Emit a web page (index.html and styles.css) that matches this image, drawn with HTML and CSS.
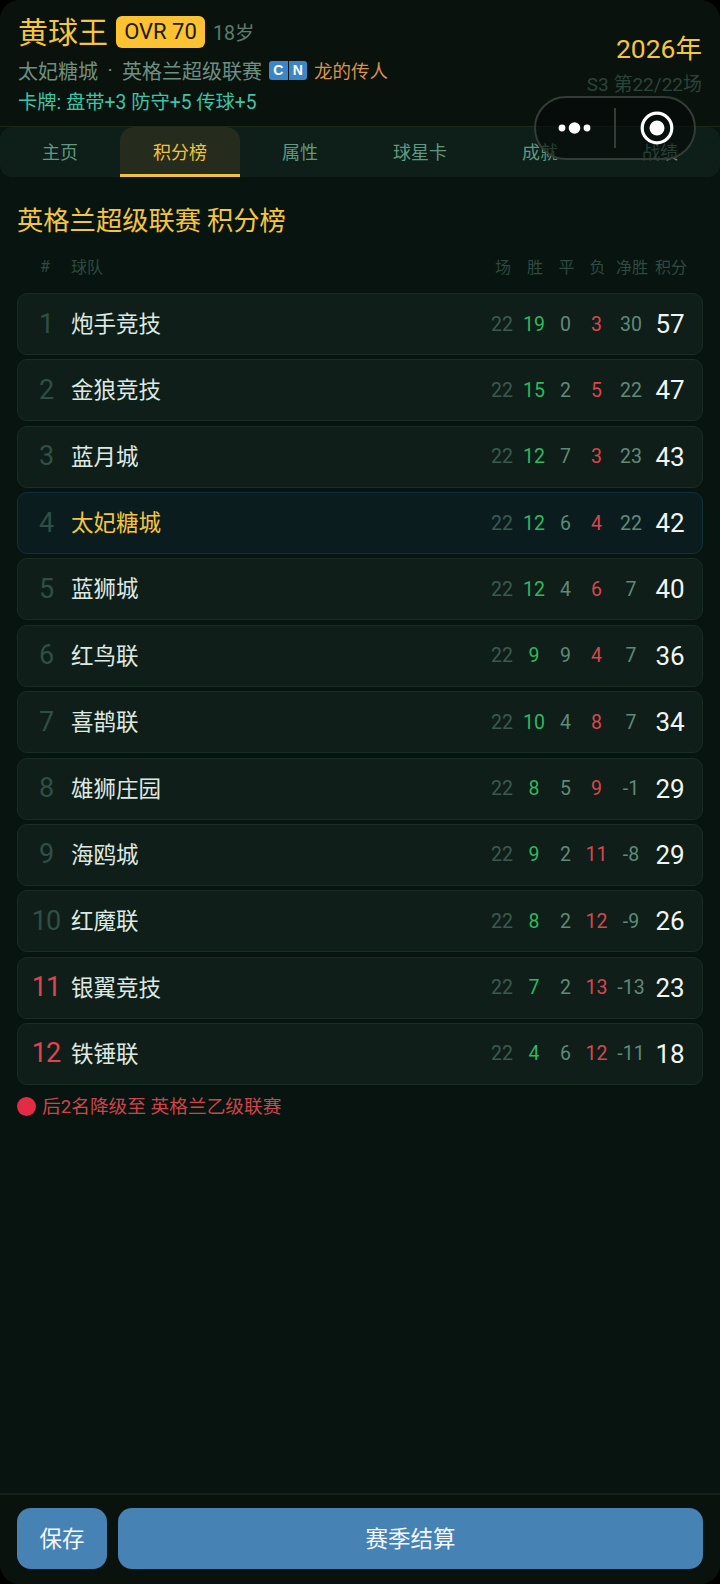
FILE: index.html
```html
<!DOCTYPE html>
<html lang="zh">
<head>
    <meta charset="UTF-8">
    <title>积分榜</title>
    <link rel="stylesheet" href="styles.css">
</head>
<body>
<div class="screen">

    <header class="top">
        <div class="top-left">
            <div class="name-line">
                <span class="player-name">黄球王</span>
                <span class="ovr">OVR 70</span>
                <span class="age">18岁</span>
            </div>
            <div class="club-line">
                <span>太妃糖城</span>
                <span class="club-dot">·</span>
                <span>英格兰超级联赛</span>
                <span class="flag"><i>C</i><i>N</i></span>
                <span class="trait">龙的传人</span>
            </div>
            <div class="card-line">卡牌: 盘带+3 防守+5 传球+5</div>
        </div>
        <div class="top-right">
            <div class="year">2026年</div>
            <div class="season">S3 第22/22场</div>
        </div>
    </header>

    <!-- Capsule -->
    <div class="capsule">
        <svg class="capsule-dots" width="36" height="12" viewBox="0 0 36 12"><circle cx="5" cy="6" r="3.4"/><circle cx="17.500" cy="6" r="5.800"/><circle cx="30" cy="6" r="3.400"/></svg>
        <span class="capsule-line"></span>
        <svg class="capsule-target" width="34" height="34" viewBox="0 0 34 34"><circle cx="17" cy="17" r="14.800" fill="none" stroke="#fff" stroke-width="3.200"/><circle cx="17" cy="17" r="7.500" fill="#fff"/></svg>
    </div>

    <nav class="tabs">
        <div class="tab">主页</div>
        <div class="tab active">积分榜</div>
        <div class="tab">属性</div>
        <div class="tab">球星卡</div>
        <div class="tab">成就</div>
        <div class="tab">战绩</div>
    </nav>

    <main class="content">
        <h2 class="league-title">英格兰超级联赛 积分榜</h2>

        <div class="table-head">
            <span>#</span><span class="team-head">球队</span><span>场</span><span>胜</span><span>平</span><span>负</span><span>净胜</span><span>积分</span>
        </div>

        <div class="rows">
            <div class="row"><span class="rank">1</span><span class="team">炮手竞技</span><span class="p">22</span><span class="w">19</span><span class="d">0</span><span class="l">3</span><span class="gd">30</span><span class="pts">57</span></div>
            <div class="row"><span class="rank">2</span><span class="team">金狼竞技</span><span class="p">22</span><span class="w">15</span><span class="d">2</span><span class="l">5</span><span class="gd">22</span><span class="pts">47</span></div>
            <div class="row"><span class="rank">3</span><span class="team">蓝月城</span><span class="p">22</span><span class="w">12</span><span class="d">7</span><span class="l">3</span><span class="gd">23</span><span class="pts">43</span></div>
            <div class="row mine"><span class="rank">4</span><span class="team">太妃糖城</span><span class="p">22</span><span class="w">12</span><span class="d">6</span><span class="l">4</span><span class="gd">22</span><span class="pts">42</span></div>
            <div class="row"><span class="rank">5</span><span class="team">蓝狮城</span><span class="p">22</span><span class="w">12</span><span class="d">4</span><span class="l">6</span><span class="gd">7</span><span class="pts">40</span></div>
            <div class="row"><span class="rank">6</span><span class="team">红鸟联</span><span class="p">22</span><span class="w">9</span><span class="d">9</span><span class="l">4</span><span class="gd">7</span><span class="pts">36</span></div>
            <div class="row"><span class="rank">7</span><span class="team">喜鹊联</span><span class="p">22</span><span class="w">10</span><span class="d">4</span><span class="l">8</span><span class="gd">7</span><span class="pts">34</span></div>
            <div class="row"><span class="rank">8</span><span class="team">雄狮庄园</span><span class="p">22</span><span class="w">8</span><span class="d">5</span><span class="l">9</span><span class="gd">-1</span><span class="pts">29</span></div>
            <div class="row"><span class="rank">9</span><span class="team">海鸥城</span><span class="p">22</span><span class="w">9</span><span class="d">2</span><span class="l">11</span><span class="gd">-8</span><span class="pts">29</span></div>
            <div class="row"><span class="rank">10</span><span class="team">红魔联</span><span class="p">22</span><span class="w">8</span><span class="d">2</span><span class="l">12</span><span class="gd">-9</span><span class="pts">26</span></div>
            <div class="row down"><span class="rank">11</span><span class="team">银翼竞技</span><span class="p">22</span><span class="w">7</span><span class="d">2</span><span class="l">13</span><span class="gd">-13</span><span class="pts">23</span></div>
            <div class="row down"><span class="rank">12</span><span class="team">铁锤联</span><span class="p">22</span><span class="w">4</span><span class="d">6</span><span class="l">12</span><span class="gd">-11</span><span class="pts">18</span></div>
        </div>

        <div class="note"><span class="note-dot"></span>后2名降级至 英格兰乙级联赛</div>
    </main>

    <footer class="bottom">
        <button class="btn btn-save">保存</button>
        <button class="btn btn-next">赛季结算</button>
    </footer>

</div>
</body>
</html>
```

FILE: styles.css
```css
* {
    box-sizing: border-box;
}

body {
    margin: 0;
    background: #000;
    font-family: Roboto, "Noto Sans CJK SC", sans-serif;
}

.screen {
    position: relative;
    width: 720px;
    height: 1584px;
    display: flex;
    flex-direction: column;
    background: #07140f;
    border-radius: 20px;
    overflow: hidden;
}

/* plain chinese labels, centred on the CJK font's own metrics */
.player-name,
.tab,
.league-title,
.team,
.btn {
    font-family: "Noto Sans CJK SC", sans-serif;
}

/* header */
.top {
    height: 127px;
    flex: none;
    padding: 12px 18px 0 18px;
    display: flex;
    justify-content: space-between;
    background: #0a120e;
    border-bottom: 1px solid #1c2a1c;
}

.name-line {
    display: flex;
    align-items: center;
    height: 40px;
}

.player-name {
    color: #f4c63f;
    font-size: 30px;
    line-height: 40px;
    padding-bottom: 4px;
}

.ovr {
    margin-left: 8px;
    width: 89px;
    height: 32px;
    line-height: 32px;
    text-align: center;
    background: #fdc232;
    color: #1a1a10;
    font-size: 22px;
    border-radius: 6px;
}

.age {
    margin-left: 8px;
    padding-bottom: 2px;
    color: #5d7c6e;
    font-size: 19.500px;
}

.club-line {
    display: flex;
    align-items: center;
    height: 30px;
    margin-top: 3px;
    color: #6f9080;
    font-size: 20px;
    white-space: nowrap;
}

.club-dot {
    width: 24px;
    text-align: center;
}

.flag {
    display: flex;
    margin-left: 7px;
    height: 19px;
    gap: 1px;
}

.flag i {
    width: 18.500px;
    background: #3c86c8;
    color: #fff;
    font-family: "Liberation Sans", sans-serif;
    font-size: 14px;
    font-style: normal;
    font-weight: bold;
    line-height: 19px;
    text-align: center;
}

.flag i:first-child {
    border-radius: 3px 0 0 3px;
}

.flag i:last-child {
    border-radius: 0 3px 3px 0;
}

.trait {
    margin-left: 7px;
    color: #d9914d;
    font-size: 18.500px;
}

.card-line {
    margin-top: 5px;
    color: #3fc4a6;
    font-size: 19.300px;
    line-height: 26px;
}

.top-right {
    padding-top: 20px;
    text-align: right;
}

.year {
    color: #f4c63f;
    font-size: 26.500px;
    line-height: 34px;
}

.season {
    margin-top: 7px;
    color: #2b4439;
    font-size: 19px;
    line-height: 24px;
}

/* capsule */
.capsule {
    position: absolute;
    top: 96px;
    left: 534px;
    width: 162px;
    height: 64px;
    display: flex;
    align-items: center;
    background: rgba(5, 10, 8, 0.62);
    border: 2px solid #333d36;
    border-radius: 32px;
}

.capsule-dots {
    margin-left: 21px;
    fill: #fff;
}

.capsule-line {
    margin-left: 21px;
    width: 2px;
    height: 40px;
    background: #333d36;
}

.capsule-target {
    margin-left: 24px;
}

/* tabs */
.tabs {
    flex: none;
    height: 50px;
    display: flex;
    background: #0e1e18;
    border-radius: 12px;
}

.tab {
    width: 120px;
    text-align: center;
    font-size: 18px;
    line-height: 48px;
    color: #5f9a80;
    border-bottom: 3px solid transparent;
}

.tab.active {
    color: #f0c33c;
    background: #252c1d;
    border-bottom-color: #f0c33c;
    border-radius: 14px 14px 0 0;
}

/* table */
.content {
    flex: 1;
    padding: 24px 17px 0 17px;
}

.league-title {
    margin: 0;
    color: #f4c63f;
    font-size: 26.300px;
    font-weight: 400;
    line-height: 36px;
}

.table-head,
.row {
    display: grid;
    grid-template-columns: 24px 1fr 32px 32px 31px 31px 38px 40px;
    align-items: center;
    padding: 0 12px 0 16px;
    text-align: center;
}

.table-head {
    height: 40px;
    margin-top: 9px;
    margin-bottom: 7px;
    color: #2f4a3f;
    font-size: 16px;
}

.team-head {
    margin-left: 14px;
    text-align: left;
}

.rows {
    display: flex;
    flex-direction: column;
    gap: 4.360px;
}

.row {
    height: 62px;
    background: #0f1e18;
    border: 1px solid #1a2d25;
    border-radius: 10px;
    font-size: 19.500px;
}

.row.mine {
    background: #0b1c1f;
    border-color: #123039;
}

.rank {
    justify-self: center;
    padding-bottom: 1px;
    color: #2f4f44;
    font-size: 27px;
    letter-spacing: -1px;
    white-space: nowrap;
}

.down .rank {
    color: #e0444f;
}

.team {
    margin-left: 13px;
    padding-bottom: 4px;
    color: #dfe9e4;
    font-size: 22.500px;
    text-align: left;
}

.mine .team {
    color: #f4c63f;
}

.p {
    color: #3a5a4e;
}

.w {
    color: #2fb85f;
}

.d,
.gd {
    color: #5f8a78;
}

.l {
    color: #d8474f;
}

.pts {
    color: #f0f5f2;
    font-size: 26px;
}

.note {
    display: flex;
    align-items: center;
    margin-top: 8px;
    color: #cf444c;
    font-size: 18.700px;
    line-height: 28px;
}

.note-dot {
    width: 19px;
    height: 19px;
    margin-right: 6px;
    border-radius: 50%;
    background: #e22c45;
}

/* footer */
.bottom {
    flex: none;
    height: 91px;
    padding: 13px 17px 0 17px;
    display: flex;
    gap: 11px;
    background: #0a120e;
    border-top: 2px solid #17231a;
}

.btn {
    height: 61px;
    padding: 0 0 4px 0;
    border: none;
    border-radius: 14px;
    background: #4682b4;
    color: #f2f8fb;
    font-size: 22.500px;
}

.btn-save {
    width: 90px;
    flex: none;
}

.btn-next {
    flex: 1;
}
```
